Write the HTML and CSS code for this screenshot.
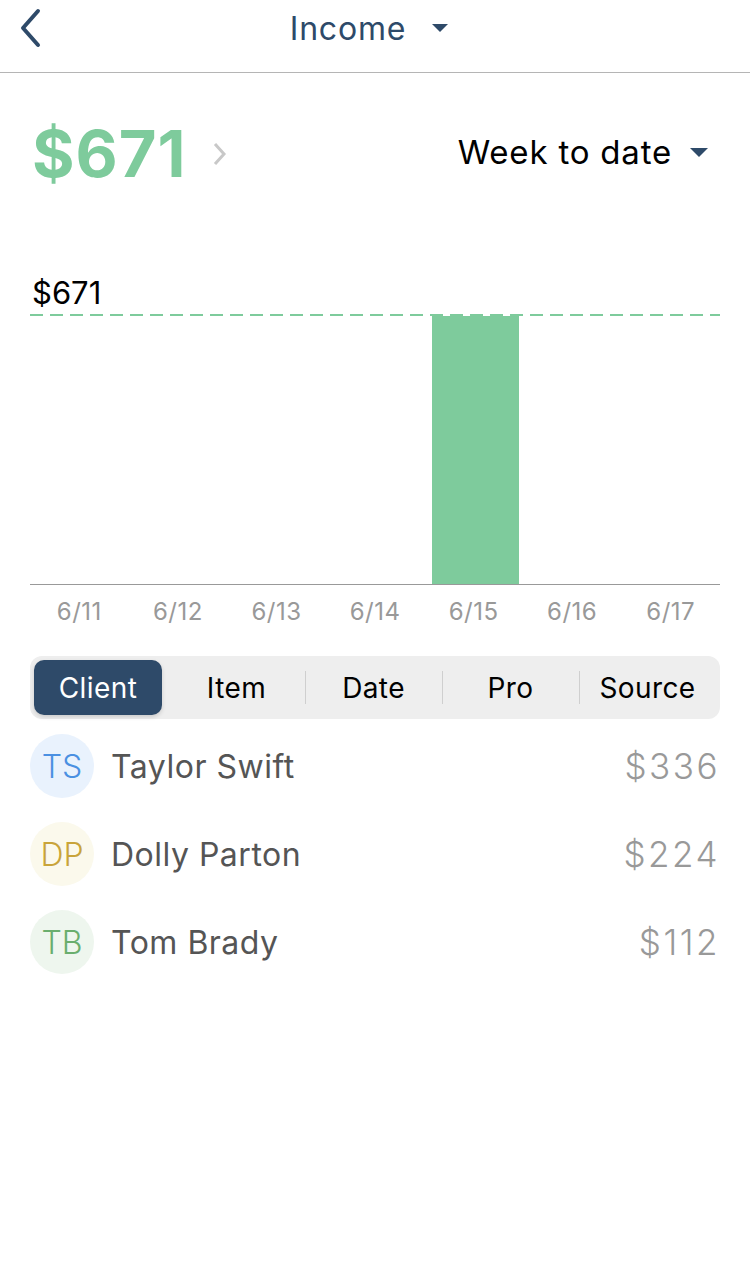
FILE: index.html
```html
<!DOCTYPE html>
<html lang="en">
<head>
    <meta charset="UTF-8">
    <meta name="viewport" content="width=device-width, initial-scale=1.0">
    <title>Income</title>
    <link rel="stylesheet" href="styles.css">
</head>
<body>

    <!-- top bar -->
    <header class="topbar">
        <svg class="back" width="24" height="40" viewBox="0 0 24 40">
            <path d="M20 3 L5 20 L20 37" fill="none" stroke="#2e4a69" stroke-width="4" stroke-linecap="round" stroke-linejoin="round"/>
        </svg>
        <div class="title">Income<span class="caret"></span></div>
    </header>

    <!-- total -->
    <div class="summary">
        <div class="total">
            <span class="amount">$671</span>
            <svg class="more" width="18" height="24" viewBox="0 0 18 24">
                <path d="M4 2 L13 12 L4 22" fill="none" stroke="#c8c8c8" stroke-width="3"/>
            </svg>
        </div>
        <div class="period">Week to date<span class="caret"></span></div>
    </div>

    <!-- chart -->
    <div class="chart">
        <div class="max-label">$671</div>
        <div class="plot">
            <div class="col"></div>
            <div class="col"></div>
            <div class="col"></div>
            <div class="col"></div>
            <div class="col"><div class="bar"></div></div>
            <div class="col"></div>
            <div class="col"></div>
        </div>
        <div class="days">
            <span>6/11</span>
            <span>6/12</span>
            <span>6/13</span>
            <span>6/14</span>
            <span>6/15</span>
            <span>6/16</span>
            <span>6/17</span>
        </div>
    </div>

    <!-- segmented control -->
    <div class="tabs">
        <div class="tab active">Client</div>
        <div class="tab">Item</div>
        <div class="tab sep">Date</div>
        <div class="tab sep">Pro</div>
        <div class="tab sep">Source</div>
    </div>

    <!-- clients -->
    <ul class="list">
        <li class="row">
            <span class="avatar blue">TS</span>
            <span class="name">Taylor Swift</span>
            <span class="value">$336</span>
        </li>
        <li class="row">
            <span class="avatar gold">DP</span>
            <span class="name">Dolly Parton</span>
            <span class="value">$224</span>
        </li>
        <li class="row">
            <span class="avatar green">TB</span>
            <span class="name">Tom Brady</span>
            <span class="value">$112</span>
        </li>
    </ul>

</body>
</html>
```

FILE: styles.css
```css
body {
    font-family: Inter, Roboto, "Liberation Sans", Arial, sans-serif;
    background: #fff;
    color: #000;
    margin: 0;
    padding: 0;
}
.caret {
    display: inline-block;
    width: 0;
    height: 0;
    border-left: 8px solid transparent;
    border-right: 8px solid transparent;
    border-top: 8px solid #2e4a69;
    vertical-align: middle;
    margin-left: 26px;
    margin-top: -6px;
}
.topbar {
    height: 72px;
    border-bottom: 1px solid #b5b5b5;
    display: flex;
    align-items: center;
    justify-content: center;
    position: relative;
}
.back {
    position: absolute;
    left: 18px;
    top: 8px;
}
.title {
    font-size: 32px;
    letter-spacing: 0.8px;
    color: #2e4a69;
    margin-top: -16px;
    padding-right: 12px;
}
.summary {
    display: flex;
    justify-content: space-between;
    align-items: center;
    padding: 0 42px 0 32px;
    height: 160px;
}
.total {
    display: flex;
    align-items: center;
}
.amount {
    font-size: 65px;
    font-weight: bold;
    color: #7ecb9c;
    letter-spacing: 1px;
}
.more {
    margin-left: 24px;
    margin-top: 2px;
}
.period {
    font-size: 33px;
    letter-spacing: 0.8px;
    color: #000;
    margin-top: -2px;
}
.period .caret {
    margin-left: 18px;
    border-left-width: 9px;
    border-right-width: 9px;
    border-top-width: 9px;
}
.chart {
    margin: 0 30px;
    padding-top: 40px;
}
.max-label {
    font-size: 31px;
    padding-left: 2px;
    line-height: 40px;
}
.plot {
    height: 268px;
    display: flex;
    padding-top: 2px;
    background: repeating-linear-gradient(90deg, #7ecb9c 0 13px, transparent 13px 20px) top / 100% 2px no-repeat;
    border-bottom: 1px solid #999;
    margin-top: 1px;
}
.col {
    flex: 1;
    display: flex;
    justify-content: center;
    align-items: flex-end;
}
.bar {
    width: 87px;
    height: 100%;
    background: #7ecb9c;
    margin-left: 3px;
}
.days {
    display: flex;
    height: 52px;
    align-items: center;
}
.days span {
    flex: 1;
    text-align: center;
    font-size: 24px;
    letter-spacing: 0.5px;
    color: #999;
}
.tabs {
    margin: 19px 30px 0;
    background: #eeeeee;
    border-radius: 12px;
    height: 63px;
    padding: 4px;
    box-sizing: border-box;
    display: flex;
    align-items: stretch;
}
.tab {
    flex: 1;
    display: flex;
    align-items: center;
    justify-content: center;
    font-size: 28px;
    letter-spacing: 0.4px;
    color: #000;
    position: relative;
}
.tab.active {
    background: #2e4a69;
    color: #fff;
    border-radius: 10px;
    box-shadow: 0 2px 4px rgba(0, 0, 0, 0.15);
    flex: 0 0 128px;
    margin-right: 6px;
}
.tab.sep::before {
    content: "";
    position: absolute;
    left: 0;
    top: 11px;
    bottom: 11px;
    width: 1px;
    background: #cfcfcf;
}
.list {
    list-style: none;
    margin: 0;
    padding: 0 32px 0 30px;
}
.row {
    display: flex;
    align-items: center;
    height: 88px;
}
.row:first-child {
    margin-top: 3px;
}
.avatar {
    width: 64px;
    height: 64px;
    border-radius: 50%;
    display: flex;
    align-items: center;
    justify-content: center;
    font-size: 32px;
    font-weight: 300;
    flex: none;
}
.avatar.blue {
    background: #e9f2fd;
    color: #4a90e2;
}
.avatar.gold {
    background: #fbf9ec;
    color: #c9a43a;
}
.avatar.green {
    background: #eef6ee;
    color: #6aae6e;
}
.name {
    margin-left: 17px;
    font-size: 32px;
    letter-spacing: 0.5px;
    color: #555;
    flex: 1;
}
.value {
    font-size: 35px;
    font-weight: 300;
    letter-spacing: 2.5px;
    margin-right: -2px;
    color: #999;
}
```
